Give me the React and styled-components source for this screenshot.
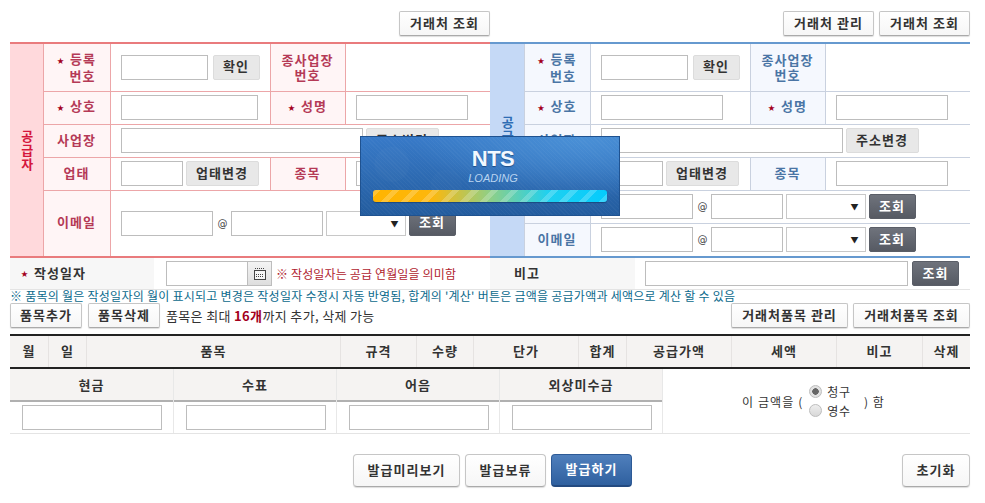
import React from "react";
import styled, { createGlobalStyle, css } from "styled-components";

const GlobalStyle = createGlobalStyle`
  html, body {
    margin: 0;
    padding: 0;
    background: #fff;
    overflow: hidden;
  }
  body {
    font-family: "Noto Sans CJK KR", "Liberation Sans", sans-serif;
    font-size: 12px;
    color: #333;
  }
`;

const tones = {
  red: {
    top: "#e97b7d",
    line: "#eca6a8",
    title: "#ffd9dc",
    titleText: "#d5173c",
    label: "#fff5f6",
    labelText: "#b53a56",
  },
  blue: {
    top: "#6699cf",
    line: "#c9d1df",
    title: "#c5d9f6",
    titleText: "#2e6db4",
    label: "#f5f8fe",
    labelText: "#4a75a5",
  },
};

const Page = styled.div`
  position: relative;
  width: 985px;
  height: 503px;
  padding: 11px 15px 0 10px;
  box-sizing: border-box;
`;

const TopBar = styled.div`
  display: flex;
  height: 31px;
`;

const TopSide = styled.div`
  width: 480px;
  display: flex;
  justify-content: flex-end;
  gap: 5px;
`;

const Button = styled.button`
  box-sizing: border-box;
  width: ${(p) => p.$w}px;
  height: ${(p) => p.$h || 25}px;
  flex: none;
  padding: 0 0 3px;
  font-family: inherit;
  font-size: 13px;
  font-weight: 700;
  letter-spacing: 1px;
  white-space: nowrap;
  border-radius: 2px;
  color: #333;
  ${(p) =>
    p.$kind === "gray" &&
    css`
      background: #e8e8e8;
      border: 1px solid #dcdcdc;
    `}
  ${(p) =>
    p.$kind === "dark" &&
    css`
      background: linear-gradient(#6f737c, #565a63);
      border: 1px solid #5a5e67;
      color: #fff;
    `}
  ${(p) =>
    p.$kind === "blue" &&
    css`
      background: linear-gradient(#4f7fbc, #2f609f);
      border: 1px solid #2d5a96;
      border-bottom: 2px solid #234a80;
      color: #fff;
      border-radius: 4px;
    `}
  ${(p) =>
    !p.$kind &&
    css`
      background: linear-gradient(#fff, #f6f6f6);
      border: 1px solid #c6c6c6;
      border-bottom-color: #aaa;
      box-shadow: 0 1px 1px #ddd;
    `}
  ${(p) =>
    p.$large &&
    css`
      border-radius: 4px;
    `}
`;

const Sheets = styled.div`
  display: flex;
`;

const PartyTable = styled.table`
  width: 480px;
  height: 216px;
  table-layout: fixed;
  border-collapse: collapse;
  border-top: 2px solid ${(p) => tones[p.$tone].top};
  border-bottom: 2px solid ${(p) => tones[p.$tone].top};
  --line: ${(p) => tones[p.$tone].line};
  --label: ${(p) => tones[p.$tone].label};
  --label-text: ${(p) => tones[p.$tone].labelText};
  --title: ${(p) => tones[p.$tone].title};
  --title-text: ${(p) => tones[p.$tone].titleText};
`;

const Col = styled.col`
  width: ${(p) => p.$w}px;
`;

const Row = styled.tr`
  height: ${(p) => p.$h}px;
`;

const TitleCell = styled.th`
  padding: 0 8px 0 10px;
  background: var(--title);
  color: var(--title-text);
  font-size: 13px;
  line-height: 14px;
  border-right: 1px solid var(--line);
  word-break: break-all;
`;

const LabelCell = styled.th`
  padding: 0 0 ${(p) => (p.$two ? 0 : 3)}px;
  background: var(--label);
  color: var(--label-text);
  font-size: 13px;
  line-height: 15px;
  letter-spacing: 1px;
  font-weight: 700;
  text-align: center;
  border: 1px solid var(--line);
`;

const FieldCell = styled.td`
  padding: 0 0 0 10px;
  border: 1px solid var(--line);
  border-right: 0;
  &:not(:last-child) {
    border-right: 1px solid var(--line);
  }
`;

const Star = styled.span`
  color: #a3001c;
  font-size: 7px;
  letter-spacing: 0;
  margin-right: 6px;
  vertical-align: 1px;
`;

const Indent = styled.span`
  padding-left: 12px;
`;

const Fields = styled.div`
  display: flex;
  align-items: center;
  gap: ${(p) => p.$gap ?? 3}px;
`;

const Input = styled.input`
  box-sizing: border-box;
  display: block;
  width: ${(p) => p.$w}px;
  height: 25px;
  flex: none;
  margin: 0;
  padding: 0;
  background: #fff;
  border: 1px solid #bdbdbd;
  border-radius: 0;
  outline: none;
`;

const At = styled.span`
  width: 8px;
  margin: 0 2px;
  font-size: 10px;
  font-family: "DejaVu Sans", sans-serif;
  color: #444;
`;

const Select = styled.div`
  box-sizing: border-box;
  width: 80px;
  height: 25px;
  flex: none;
  display: flex;
  align-items: center;
  justify-content: flex-end;
  padding-right: 6px;
  background: #fff;
  border: 1px solid #c8c8c8;
  color: #222;
  font-size: 8px;
`;

const StarLabel = ({ children }) => (
  <>
    <Star>★</Star>
    {children}
  </>
);

const EmailFields = ({ second }) => (
  <Fields>
    <Input $w={92} />
    <At>@</At>
    <Input $w={second} />
    <Select>▼</Select>
    <Button $w={47} $kind="dark">
      조회
    </Button>
  </Fields>
);

const InfoRows = ({ nameWidth }) => (
  <>
    <Row $h={33}>
      <LabelCell>
        <StarLabel>상호</StarLabel>
      </LabelCell>
      <FieldCell>
        <Input $w={nameWidth} />
      </FieldCell>
      <LabelCell>
        <StarLabel>성명</StarLabel>
      </LabelCell>
      <FieldCell>
        <Input $w={112} />
      </FieldCell>
    </Row>
    <Row $h={33}>
      <LabelCell>사업장</LabelCell>
      <FieldCell colSpan={3}>
        <Fields>
          <Input $w={242} />
          <Button $w={73} $kind="gray">
            주소변경
          </Button>
        </Fields>
      </FieldCell>
    </Row>
    <Row $h={33}>
      <LabelCell>업태</LabelCell>
      <FieldCell>
        <Fields>
          <Input $w={62} />
          <Button $w={73} $kind="gray">
            업태변경
          </Button>
        </Fields>
      </FieldCell>
      <LabelCell>종목</LabelCell>
      <FieldCell>
        <Input $w={112} />
      </FieldCell>
    </Row>
  </>
);

const PartySheet = ({ tone, title, titleWidth, labelWidth, nameWidth, children }) => (
  <PartyTable $tone={tone}>
    <colgroup>
      <Col $w={titleWidth} />
      <Col $w={labelWidth} />
      <Col $w={160} />
      <Col $w={75} />
      <Col $w={145} />
    </colgroup>
    <tbody>
      <Row $h={48}>
        <TitleCell rowSpan={tone === "red" ? 5 : 6}>{title}</TitleCell>
        <LabelCell $two>
          <StarLabel>등록</StarLabel>
          <br />
          <Indent>번호</Indent>
        </LabelCell>
        <FieldCell>
          <Fields $gap={5}>
            <Input $w={87} />
            <Button $w={47} $kind="gray">
              확인
            </Button>
          </Fields>
        </FieldCell>
        <LabelCell $two>
          종사업장
          <br />
          번호
        </LabelCell>
        <FieldCell />
      </Row>
      <InfoRows nameWidth={nameWidth} />
      {children}
    </tbody>
  </PartyTable>
);

const DateRow = styled.div`
  display: flex;
  height: 32px;
  box-sizing: border-box;
  border-bottom: 1px solid #e4e4e4;
`;

const DateLabel = styled.div`
  box-sizing: border-box;
  width: ${(p) => p.$w}px;
  flex: none;
  display: flex;
  align-items: center;
  padding: 0 0 2px ${(p) => p.$pad}px;
  background: #f7f7f7;
  font-size: 13px;
  font-weight: 700;
  letter-spacing: 1px;
  color: #333;
`;

const DateField = styled.div`
  width: ${(p) => p.$w}px;
  flex: none;
  display: flex;
  align-items: center;
  padding-left: ${(p) => p.$pad}px;
  box-sizing: border-box;
  gap: ${(p) => p.$gap ?? 0}px;
`;

const CalendarButton = styled.div`
  box-sizing: border-box;
  width: 24px;
  height: 25px;
  flex: none;
  display: flex;
  align-items: center;
  justify-content: center;
  background: linear-gradient(#f4f4f4, #dedede);
  border: 1px solid #bdbdbd;
  border-left: 0;
`;

const RedNote = styled.span`
  margin-left: 4px;
  color: #b01c2e;
  font-size: 12px;
  letter-spacing: 0.15px;
  white-space: nowrap;
`;

const BlueNote = styled.div`
  height: 13px;
  line-height: 12px;
  color: #0b6a8c;
  font-size: 12px;
  letter-spacing: 0.25px;
  white-space: nowrap;
`;

const ItemBar = styled.div`
  display: flex;
  align-items: center;
  gap: 6px;
  height: 25px;
`;

const ItemNote = styled.span`
  font-size: 13px;
  letter-spacing: 0.35px;
  color: #333;
  white-space: nowrap;
`;

const Count = styled.b`
  color: #a3001c;
`;

const Spacer = styled.div`
  flex: 1;
`;

const ButtonPair = styled.div`
  display: flex;
  gap: 5px;
`;

const HeadTable = styled.div`
  display: grid;
  grid-template-columns: 38px 38px 254px 76px 57px 105px 48px 105px 105px 86px 48px;
  height: 35px;
  margin-top: 6px;
  box-sizing: border-box;
  border-top: 2px solid #222;
  border-bottom: 2px solid #222;
  background: #f5f3f2;
`;

const HeadCell = styled.div`
  display: flex;
  align-items: center;
  justify-content: center;
  padding-bottom: 2px;
  font-size: 13px;
  font-weight: 700;
  letter-spacing: 1px;
  color: #333;
  & + & {
    border-left: 1px solid #e6e3e2;
  }
`;

const PayRow = styled.div`
  display: flex;
  height: 65px;
  box-sizing: border-box;
  border-bottom: 1px solid #e4e4e4;
`;

const PayColumn = styled.div`
  box-sizing: border-box;
  width: 163px;
  flex: none;
  display: flex;
  flex-direction: column;
  & + & {
    border-left: 1px solid #e8e8e8;
  }
`;

const PayHead = styled.div`
  height: 33px;
  flex: none;
  box-sizing: border-box;
  display: flex;
  align-items: center;
  justify-content: center;
  background: #f5f3f2;
  border-bottom: 2px solid #b0b0b0;
  font-size: 13px;
  font-weight: 700;
  letter-spacing: 1px;
`;

const PayField = styled.div`
  flex: 1;
  display: flex;
  align-items: center;
  padding-left: 12px;
`;

const Claim = styled.div`
  flex: 1;
  display: flex;
  align-items: center;
  justify-content: center;
  padding-right: 6px;
  font-size: 12px;
  letter-spacing: 1.1px;
  color: #333;
  border-left: 1px solid #e8e8e8;
`;

const RadioStack = styled.div`
  display: flex;
  flex-direction: column;
  margin: 0 13px 0 6px;
`;

const RadioLine = styled.label`
  display: flex;
  align-items: center;
  gap: 5px;
  height: 19px;
  letter-spacing: 0.75px;
`;

const RadioDot = styled.span`
  box-sizing: border-box;
  width: 13px;
  height: 13px;
  flex: none;
  border-radius: 50%;
  border: 1px solid #bdbdbd;
  background: ${(p) =>
    p.$checked
      ? "radial-gradient(circle, #666 0 3px, #e2e2e2 3.5px)"
      : "linear-gradient(#eee, #d8d8d8)"};
`;

const Actions = styled.div`
  display: flex;
  gap: 5px;
  margin-top: 20px;
  padding-left: 343px;
`;

const LoadingPanel = styled.div`
  position: absolute;
  left: 360px;
  top: 136px;
  width: 260px;
  height: 80px;
  box-sizing: border-box;
  padding: 10px 12px 0;
  text-align: center;
  border: 1px solid #1f5290;
  background:
    repeating-linear-gradient(45deg, rgba(255, 255, 255, 0.03) 0 1px, transparent 1px 3px),
    radial-gradient(circle at 12% 35%, rgba(255, 255, 255, 0.02) 0 17px, transparent 18px),
    radial-gradient(circle at 33% 62%, rgba(255, 255, 255, 0.015) 0 15px, transparent 16px),
    radial-gradient(ellipse at 85% 0%, #4a90d6 0, transparent 55%),
    linear-gradient(#387ac8, #235c9e);
`;

const LoadingTitle = styled.div`
  padding-left: 6px;
  font-family: "Liberation Sans", sans-serif;
  font-size: 22px;
  line-height: 24px;
  font-weight: 700;
  letter-spacing: -0.5px;
  color: #f2f8ff;
  text-shadow: 0 1px 1px #1c4c86;
`;

const LoadingText = styled.div`
  padding-left: 6px;
  font-family: "Liberation Sans", sans-serif;
  font-size: 11px;
  line-height: 11px;
  margin-top: 2px;
  font-style: italic;
  color: #b9d4f0;
`;

const LoadingBar = styled.div`
  height: 12px;
  margin-top: 6px;
  border-radius: 3px;
  background:
    repeating-linear-gradient(135deg, rgba(255, 255, 255, 0.2) 0 5px, transparent 5px 14px),
    linear-gradient(90deg, #ffb400 0, #fdb70c 25%, #8fcf86 50%, #1fd0f0 75%, #04cbfd 100%);
  box-shadow: 0 1px 1px #1b4a80;
`;

const CalendarIcon = () => (
  <svg width="12" height="12" viewBox="0 0 12 12">
    <path d="M1 .5h10" stroke="#444" strokeDasharray="1 1" />
    <rect x=".5" y="2.5" width="11" height="9" fill="#f5f5f5" stroke="#444" />
    <path d="M2 6.5h8M2 8.5h8" stroke="#444" strokeDasharray="1 1" />
  </svg>
);

const headers = ["월", "일", "품목", "규격", "수량", "단가", "합계", "공급가액", "세액", "비고", "삭제"];
const payments = ["현금", "수표", "어음", "외상미수금"];

const App = () => {
  return (
    <Page>
      <GlobalStyle />
      <TopBar>
        <TopSide>
          <Button $w={91}>거래처 조회</Button>
        </TopSide>
        <TopSide>
          <Button $w={91}>거래처 관리</Button>
          <Button $w={91}>거래처 조회</Button>
        </TopSide>
      </TopBar>

      <Sheets>
        <PartySheet tone="red" title="공급자" titleWidth={33} labelWidth={67} nameWidth={137}>
          <Row $h={67}>
            <LabelCell>이메일</LabelCell>
            <FieldCell colSpan={3}>
              <EmailFields second={92} />
            </FieldCell>
          </Row>
        </PartySheet>
        <PartySheet tone="blue" title="공급받는자" titleWidth={34} labelWidth={66} nameWidth={122}>
          <Row $h={33}>
            <LabelCell>이메일</LabelCell>
            <FieldCell colSpan={3}>
              <EmailFields second={72} />
            </FieldCell>
          </Row>
          <Row $h={34}>
            <LabelCell>이메일</LabelCell>
            <FieldCell colSpan={3}>
              <EmailFields second={72} />
            </FieldCell>
          </Row>
        </PartySheet>
      </Sheets>

      <DateRow>
        <DateLabel $w={144} $pad={11}>
          <StarLabel>작성일자</StarLabel>
        </DateLabel>
        <DateField $w={336} $pad={12}>
          <Input $w={82} />
          <CalendarButton>
            <CalendarIcon />
          </CalendarButton>
          <RedNote>※ 작성일자는 공급 연월일을 의미함</RedNote>
        </DateField>
        <DateLabel $w={145} $pad={24}>
          비고
        </DateLabel>
        <DateField $w={335} $pad={10} $gap={4}>
          <Input $w={263} />
          <Button $w={47} $kind="dark">
            조회
          </Button>
        </DateField>
      </DateRow>

      <BlueNote>
        ※ 품목의 월은 작성일자의 월이 표시되고 변경은 작성일자 수정시 자동 반영됨, 합계의 '계산' 버튼은 금액을 공급가액과 세액으로 계산 할 수 있음
      </BlueNote>

      <ItemBar>
        <Button $w={72}>품목추가</Button>
        <Button $w={72}>품목삭제</Button>
        <ItemNote>
          품목은 최대 <Count>16개</Count>까지 추가, 삭제 가능
        </ItemNote>
        <Spacer />
        <ButtonPair>
          <Button $w={117}>거래처품목 관리</Button>
          <Button $w={117}>거래처품목 조회</Button>
        </ButtonPair>
      </ItemBar>

      <HeadTable>
        {headers.map((h) => (
          <HeadCell key={h}>{h}</HeadCell>
        ))}
      </HeadTable>

      <PayRow>
        {payments.map((p) => (
          <PayColumn key={p}>
            <PayHead>{p}</PayHead>
            <PayField>
              <Input $w={140} />
            </PayField>
          </PayColumn>
        ))}
        <Claim>
          이 금액을 (
          <RadioStack>
            <RadioLine>
              <RadioDot $checked />
              청구
            </RadioLine>
            <RadioLine>
              <RadioDot />
              영수
            </RadioLine>
          </RadioStack>
          ) 함
        </Claim>
      </PayRow>

      <Actions>
        <Button $w={107} $h={33} $large>
          발급미리보기
        </Button>
        <Button $w={81} $h={33} $large>
          발급보류
        </Button>
        <Button $w={81} $h={33} $kind="blue">
          발급하기
        </Button>
        <Spacer />
        <Button $w={68} $h={33} $large>
          초기화
        </Button>
      </Actions>

      <LoadingPanel>
        <LoadingTitle>NTS</LoadingTitle>
        <LoadingText>LOADING</LoadingText>
        <LoadingBar />
      </LoadingPanel>
    </Page>
  );
};

export default App;
